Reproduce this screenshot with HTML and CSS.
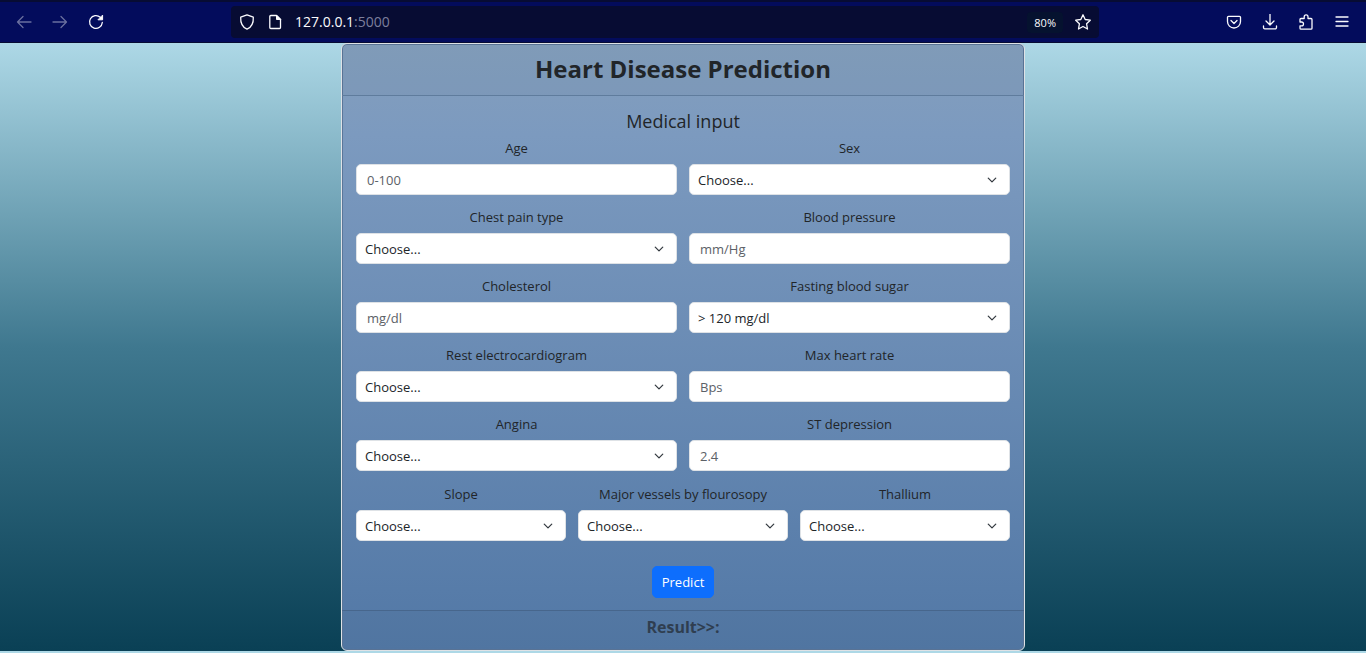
FILE: index.html
```html
<!DOCTYPE html>
<html lang="en">
<head>
<meta charset="utf-8">
<meta name="viewport" content="width=device-width, initial-scale=1">
<title>Heart Disease Prediction</title>
<link rel="stylesheet" href="styles.css">
</head>
<body>
<svg class="defs" aria-hidden="true">
  <symbol id="chevron" viewBox="0 0 16 16"><path d="M2 5l6 6 6-6" fill="none" stroke="#343a40" stroke-width="2" stroke-linecap="round" stroke-linejoin="round"/></symbol>
</svg>

<header class="browser">
  <nav class="nav-buttons" aria-label="History">
    <button class="tool dim" aria-label="Back"><svg viewBox="0 0 16 16"><path d="M15 8H1.500M7 2.500L1.500 8 7 13.500"/></svg></button>
    <button class="tool dim" aria-label="Forward"><svg viewBox="0 0 16 16"><path d="M1 8h13.500M9 2.500L14.500 8 9 13.500"/></svg></button>
    <button class="tool reload" aria-label="Reload"><svg viewBox="0 0 16 16"><path d="M14.300 8.500A6.400 6.400 0 1 1 12.300 3.300"/><path class="solid" d="M14.600 1.500v4.300H10.300z"/></svg></button>
  </nav>
  <div class="urlbar">
    <button class="tool" aria-label="Site protection"><svg viewBox="0 0 16 16"><path d="M8 .9l6.300 2.300c.3 5-1.600 9.800-6.300 12C3.300 13 1.400 8.200 1.700 3.200z"/></svg></button>
    <button class="tool" aria-label="Site information"><svg viewBox="0 0 16 16"><path d="M3.800 1.500h5.700l4 4v8a1 1 0 0 1-1 1H3.800a1 1 0 0 1-1-1v-11a1 1 0 0 1 1-1z"/><path class="solid" d="M9.500 1.500v4h4z"/></svg></button>
    <div class="address">127.0.0.1<span>:5000</span></div>
    <button class="zoom">80%</button>
    <button class="tool" aria-label="Bookmark"><svg viewBox="0 0 16 16"><path d="M8 .8l2.200 4.700 5.100.7-3.700 3.600.9 5.200L8 12.500 3.500 15l.9-5.200L.7 6.200l5.100-.7z"/></svg></button>
  </div>
  <nav class="actions" aria-label="Browser tools">
    <button class="tool" aria-label="Pocket"><svg viewBox="0 0 16 16"><path d="M2.500 2.300h11a1 1 0 0 1 1 1v4.200a6.500 6.500 0 0 1-13 0V3.300a1 1 0 0 1 1-1z"/><path d="M5 6.500l3 3 3-3"/></svg></button>
    <button class="tool" aria-label="Downloads"><svg viewBox="0 0 16 16"><path d="M8 0v10.500M4 7l4 4 4-4M1.500 12v1.500a1.300 1.300 0 0 0 1.300 1.300h10.400a1.300 1.300 0 0 0 1.300-1.300V12"/></svg></button>
    <button class="tool" aria-label="Extensions"><svg viewBox="0 0 16 16"><path d="M2 8V5.500a1 1 0 0 1 1-1h3.200V2.700a1.900 1.900 0 0 1 3.800 0v1.800h3a1 1 0 0 1 1 1v8.700a1 1 0 0 1-1 1H3a1 1 0 0 1-1-1v-2.400h1.600a1.900 1.900 0 0 0 0-3.800z"/></svg></button>
    <button class="tool" aria-label="Menu"><svg viewBox="0 0 16 16"><path d="M2 3h12M2 7.500h12M2 12h12"/></svg></button>
  </nav>
</header>

<main class="page">
  <form class="card">
    <h1 class="card-header">Heart Disease Prediction</h1>
    <div class="card-body">
      <h2 class="subtitle">Medical input</h2>
      <div class="grid">
        <div class="field"><label for="age">Age</label><input id="age" type="text" placeholder="0-100"></div>
        <div class="field"><label for="sex">Sex</label><div class="pick"><select id="sex"><option>Choose...</option></select><svg><use href="#chevron"/></svg></div></div>
        <div class="field"><label for="chest">Chest pain type</label><div class="pick"><select id="chest"><option>Choose...</option></select><svg><use href="#chevron"/></svg></div></div>
        <div class="field"><label for="bp">Blood pressure</label><input id="bp" type="text" placeholder="mm/Hg"></div>
        <div class="field"><label for="chol">Cholesterol</label><input id="chol" type="text" placeholder="mg/dl"></div>
        <div class="field"><label for="sugar">Fasting blood sugar</label><div class="pick"><select id="sugar"><option>&gt; 120 mg/dl</option></select><svg><use href="#chevron"/></svg></div></div>
        <div class="field"><label for="ecg">Rest electrocardiogram</label><div class="pick"><select id="ecg"><option>Choose...</option></select><svg><use href="#chevron"/></svg></div></div>
        <div class="field"><label for="rate">Max heart rate</label><input id="rate" type="text" placeholder="Bps"></div>
        <div class="field"><label for="angina">Angina</label><div class="pick"><select id="angina"><option>Choose...</option></select><svg><use href="#chevron"/></svg></div></div>
        <div class="field"><label for="st">ST depression</label><input id="st" type="text" placeholder="2.4"></div>
      </div>
      <div class="grid thirds">
        <div class="field"><label for="slope">Slope</label><div class="pick"><select id="slope"><option>Choose...</option></select><svg><use href="#chevron"/></svg></div></div>
        <div class="field"><label for="vessels">Major vessels by flourosopy</label><div class="pick"><select id="vessels"><option>Choose...</option></select><svg><use href="#chevron"/></svg></div></div>
        <div class="field"><label for="thal">Thallium</label><div class="pick"><select id="thal"><option>Choose...</option></select><svg><use href="#chevron"/></svg></div></div>
      </div>
      <button class="predict" type="submit">Predict</button>
    </div>
    <div class="card-footer">Result&gt;&gt;:</div>
  </form>
</main>
</body>
</html>
```
FILE: styles.css
```css
* { box-sizing: border-box; }

body {
  margin: 0;
  background: #add8e6;
  color: #212529;
  font: 13px/20px "Open Sans", "Noto Sans", sans-serif;
}

button, input, select { font: inherit; }

.defs { position: absolute; width: 0; height: 0; }

/* Browser toolbar */
.browser {
  display: flex;
  align-items: center;
  justify-content: space-between;
  padding: 4px 16px;
  border-top: 2px solid #070c33;
  border-bottom: 1px solid #070c33;
  background: #030c5c;
}

.nav-buttons, .actions { display: flex; gap: 20px; }

.tool {
  display: flex;
  padding: 0;
  border: 0;
  background: none;
  color: #fbfbfe;
}

.dim { color: #6a6f9e; }

.tool svg {
  width: 16px;
  height: 16px;
  fill: none;
  stroke: currentColor;
  stroke-width: 1.3;
  stroke-linecap: round;
  stroke-linejoin: round;
}

.tool .solid { fill: currentColor; stroke-width: 1; }

.urlbar {
  display: flex;
  align-items: center;
  gap: 12px;
  flex: 0 1 868px;
  height: 32px;
  padding: 0 8px;
  border-radius: 4px;
  background: #070c33;
}

.address {
  flex: 1;
  color: #fbfbfe;
  font-size: 14px;
}

.address span { color: #7c7f9c; }

.zoom {
  padding: 0 7px;
  border: 0;
  border-radius: 4px;
  background: #05122f;
  color: #fbfbfe;
  font-size: 11px;
  line-height: 21px;
}

/* Prediction form */
.page {
  background: linear-gradient(#add8e6, #3f788f 50%, #0a4055);
}

.card {
  width: calc(50% + 1px);
  margin: 0 auto;
  border: 1px solid #dee2e6;
  border-radius: 6px;
  background: linear-gradient(#849fbd, #7c9abf 15%, #5278a6);
  box-shadow: inset 0 0 0 1px #5b7699;
  text-align: center;
}

.card-header {
  margin: 0;
  padding: 6px 13px 7px;
  border-bottom: 1px solid #5f7c9d;
  background: rgba(33, 37, 41, 0.03);
  font-size: 24px;
  font-weight: 700;
  line-height: 38px;
}

.card-body { padding: 14px 14px 12px; }

.subtitle {
  margin: 0 0 6px;
  font-size: 18px;
  font-weight: 400;
  line-height: 22px;
}

.grid {
  display: grid;
  grid-template-columns: repeat(2, 1fr);
  gap: 12px;
}

.thirds {
  grid-template-columns: repeat(3, 1fr);
  margin-top: 13px;
}

.field {
  display: flex;
  flex-direction: column;
  gap: 6px;
}

input, select {
  width: 100%;
  height: 31px;
  border: 1px solid #dee2e6;
  border-radius: 5px;
  background: #fff;
  color: #212529;
}

input { padding: 0 10px; }
input::placeholder { color: #5c6167; opacity: 1; }

.pick { display: grid; align-items: center; }
.pick > * { grid-area: 1 / 1; }

select {
  padding: 0 28px 0 8px;
  appearance: none;
}

.pick svg {
  width: 10px;
  height: 10px;
  margin-right: 13px;
  justify-self: end;
  pointer-events: none;
}

.predict {
  margin-top: 25px;
  padding: 5px 9px;
  border: 1px solid #0d6efd;
  border-radius: 5px;
  background: #0d6efd;
  color: #fff;
}

.card-footer {
  padding: 6px 13px 13px;
  border-top: 1px solid #47668c;
  border-radius: 0 0 5px 5px;
  background: rgba(33, 37, 41, 0.03);
  color: #2f3e50;
  font-size: 16px;
  font-weight: 700;
}
```
